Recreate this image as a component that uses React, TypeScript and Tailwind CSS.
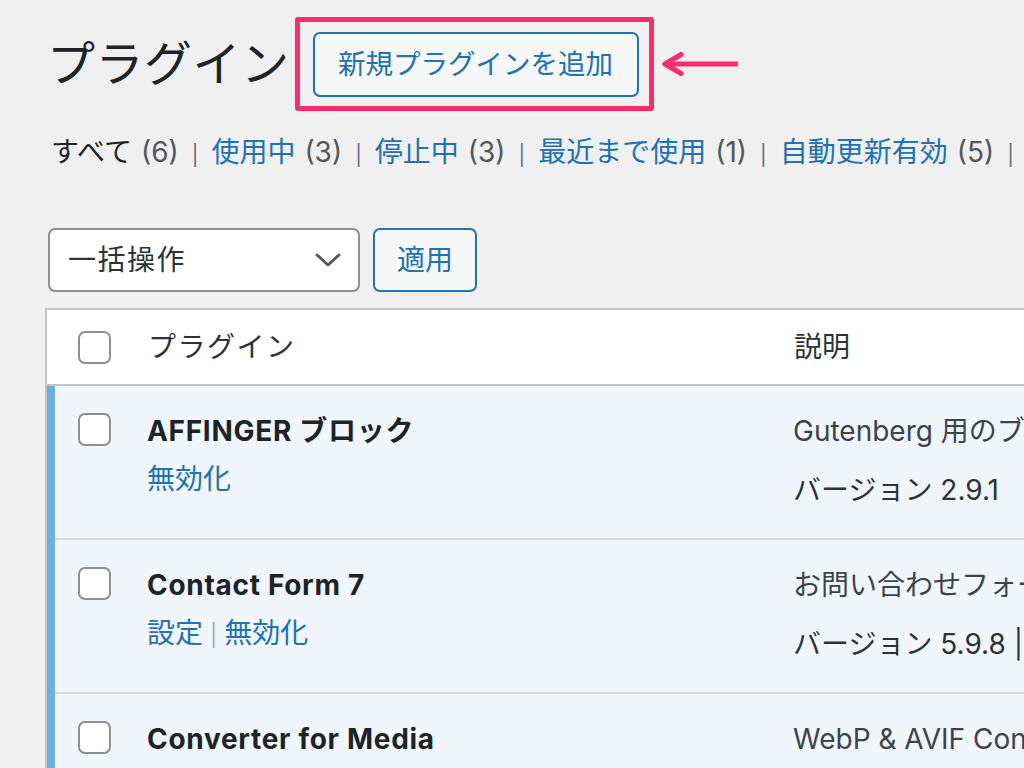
import React from "react";

const Checkbox = () => (
  <div className="w-[33px] h-[33px] rounded-[7px] border-2 border-[#8c8f94] bg-white shrink-0" />
);

type Row = {
  name: string;
  actions: string[];
  desc: string;
  version: string;
};

const rows: Row[] = [
  { name: "AFFINGER ブロック", actions: ["無効化"], desc: "Gutenberg 用のブロックを追加するプラグイン", version: "バージョン 2.9.1" },
  { name: "Contact Form 7", actions: ["設定", "無効化"], desc: "お問い合わせフォームプラグイン", version: "バージョン 5.9.8 | 作者" },
  { name: "Converter for Media", actions: ["設定", "無効化"], desc: "WebP & AVIF Converter", version: "バージョン 5.13.1" },
];

const filters = [
  { label: "すべて", count: "(6)", current: true },
  { label: "使用中", count: "(3)" },
  { label: "停止中", count: "(3)" },
  { label: "最近まで使用", count: "(1)" },
  { label: "自動更新有効", count: "(5)" },
];

export default function App() {
  return (
    <div className="w-[1024px] h-[768px] overflow-hidden bg-[#f0f0f1] font-['Inter','Noto_Sans_CJK_JP',sans-serif] text-[#3c434a]">
      <div className="pl-[46px] pt-[17px]">
        {/* Header */}
        <div className="flex items-center">
          <h1 className="ml-[1px] text-[48px] leading-none font-normal text-[#1d2327] tracking-[0.5px]">プラグイン</h1>
          <div className="ml-[5px] border-[5px] border-[#fb2d6d] rounded-[3px] pt-[10px] pb-[9px] pl-[13px] pr-[10px]">
            <div className="w-[326px] h-[65px] border-2 border-[#2271b1] rounded-[7px] bg-[#f6f7f7] text-[#2271b1] text-[27.5px] flex items-center justify-center">
              新規プラグインを追加
            </div>
          </div>
          <svg width="80" height="30" viewBox="0 0 80 30" className="ml-[4px]">
            <g stroke="#fa2d6c" strokeWidth="5" strokeLinecap="round" strokeLinejoin="round" fill="none">
              <line x1="7" y1="15" x2="80" y2="15" />
              <polyline points="23,5.5 7,15 23,24.5" />
            </g>
          </svg>
        </div>

        {/* Filters */}
        <div className="mt-[23px] ml-[5px] flex items-baseline h-[36px] text-[28px] leading-[36px] whitespace-nowrap">
          {filters.map((f, i) => (
            <span key={i} className="flex items-baseline">
              <span className={f.current ? "text-[#1d2327]" : "text-[#2271b1]"}>{f.label}</span>
              <span className="ml-[9px] text-[#50575e]">{f.count}</span>
              <span className="mx-[13px] text-[20px] text-[#646970]">|</span>
            </span>
          ))}
        </div>

        {/* Bulk actions */}
        <div className="mt-[58px] ml-[2px] flex items-center">
          <div className="w-[312px] h-[64px] border-2 border-[#8c8f94] rounded-[7px] bg-white flex items-center justify-between pl-[18px] pr-[17px]">
            <span className="text-[28px] tracking-[1.5px] text-[#2c3338]">一括操作</span>
            <svg width="26" height="14" viewBox="0 0 26 14">
              <polyline points="2,2 13,12 24,2" fill="none" stroke="#50575e" strokeWidth="3" strokeLinecap="round" strokeLinejoin="round" />
            </svg>
          </div>
          <div className="ml-[13px] w-[104px] h-[64px] border-2 border-[#2271b1] rounded-[7px] bg-[#f6f7f7] text-[#2271b1] text-[28px] flex items-center justify-center">
            適用
          </div>
        </div>

        {/* Table */}
        <div className="mt-[16px] ml-[-1px] w-[1100px] border-t-2 border-l-2 border-[#c3c4c7]">
          <div className="h-[76px] bg-white border-b-2 border-[#c3c4c7] flex items-center">
            <div className="w-[98px] pl-[31px] shrink-0">
              <Checkbox />
            </div>
            <div className="w-[646px] shrink-0 text-[28px] tracking-[1.5px] text-[#2c3338] pl-[3px]">プラグイン</div>
            <div className="flex-1 text-[28px] text-[#2c3338] pl-[3px]">説明</div>
          </div>
          {rows.map((r, i) => (
            <div key={i} className="flex bg-[#f0f6fc]">
              <div className="w-[8px] shrink-0 bg-[#72aee6]" />
              <div className="flex-1 h-[154px] border-b-2 border-[#dcdcde] flex">
                <div className="w-[92px] shrink-0 pl-[23px] pt-[27px]">
                  <Checkbox />
                </div>
                <div className="w-[646px] shrink-0 pt-[27px]">
                  <div className="text-[28px] leading-[36px] font-bold tracking-[0.7px] text-[#1d2327] whitespace-nowrap">{r.name}</div>
                  <div className="mt-[12px] text-[28px] leading-[36px] text-[#2271b1] flex items-baseline whitespace-nowrap">
                    {r.actions.map((a, j) => (
                      <span key={j} className="flex items-baseline">
                        {j > 0 && <span className="mx-[7px] text-[22px] text-[#a7aaad]">|</span>}
                        <span>{a}</span>
                      </span>
                    ))}
                  </div>
                </div>
                <div className="flex-1 pt-[27px] text-[28px] leading-[36px] text-[#3c434a] whitespace-nowrap">
                  <div>{r.desc}</div>
                  <div className="mt-[23px] text-[#2c3338]">{r.version}</div>
                </div>
              </div>
            </div>
          ))}
        </div>
      </div>
    </div>
  );
}
